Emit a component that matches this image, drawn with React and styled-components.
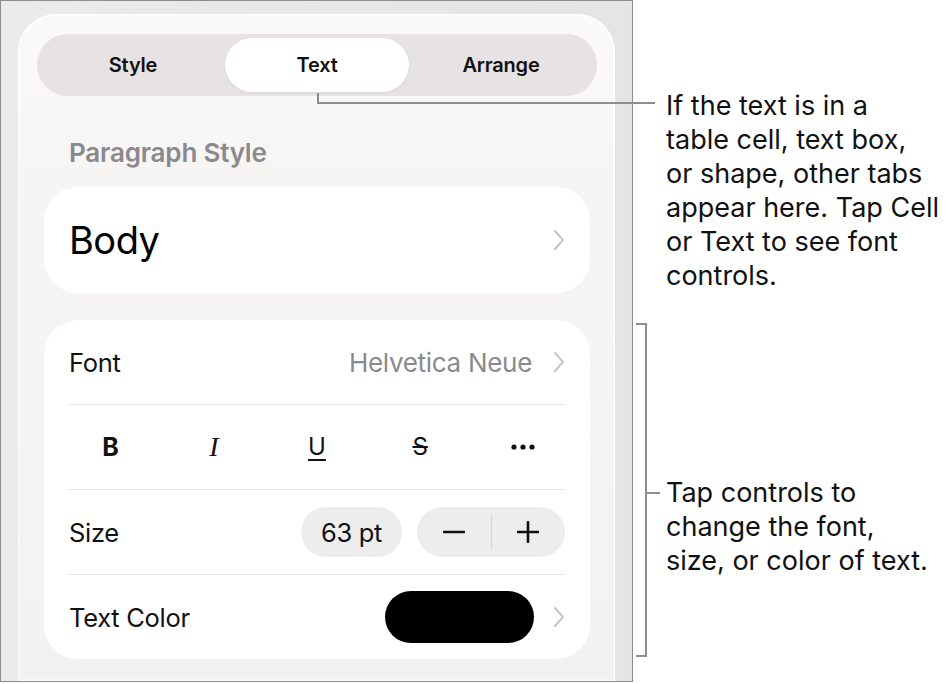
import React from 'react';
import styled, { createGlobalStyle } from 'styled-components';

const Global = createGlobalStyle`
  html, body { margin: 0; padding: 0; background: #ffffff; }
  body {
    font-family: Inter, "Noto Sans", "Liberation Sans", sans-serif;
    color: #000;
    -webkit-font-smoothing: antialiased;
  }
`;

const Page = styled.div`
  position: relative;
  width: 948px;
  height: 684px;
  display: flex;
  align-items: flex-start;
  overflow: hidden;
`;

const Frame = styled.div`
  box-sizing: border-box;
  flex-shrink: 0;
  width: 633px;
  height: 682px;
  border: 1px solid #8d8d8d;
  background: linear-gradient(90deg, #ebebeb 0%, #e6e7e8 50%, #e3e4e5 100%);
  padding: 13px 17px 0 17px;
  overflow: hidden;
`;

const Panel = styled.div`
  box-sizing: border-box;
  height: 100%;
  border-radius: 38px 38px 0 0;
  background: linear-gradient(180deg, #fcf9f9 0%, #f7f4f4 25%, #f2f2f2 100%);
  box-shadow: inset 0 0 0 1.5px rgba(255, 255, 255, 0.85);
  padding: 20px 25px 0 26px;
  display: flex;
  flex-direction: column;
`;

const TabBar = styled.div`
  box-sizing: border-box;
  margin: 0 -7px;
  height: 62px;
  border-radius: 31px;
  background: #e7e3e4;
  padding: 4px;
  display: grid;
  grid-template-columns: repeat(3, 1fr);
`;

const Tab = styled.div`
  display: flex;
  align-items: center;
  justify-content: center;
  border-radius: 27px;
  font-size: 20px;
  font-weight: 560;
  letter-spacing: -0.2px;
  color: #111;
  background: ${p => (p.$active ? '#ffffff' : 'transparent')};
  box-shadow: ${p => (p.$active ? '0 1px 3px rgba(0,0,0,0.06)' : 'none')};
`;

const SectionLabel = styled.div`
  margin: 43px 0 0 25px;
  height: 28px;
  line-height: 28px;
  font-size: 26px;
  font-weight: 600;
  color: #8a8a8e;
  letter-spacing: -0.2px;
`;

const Card = styled.div`
  margin-top: ${p => p.$mt}px;
  background: #ffffff;
  border-radius: 34px;
  display: flex;
  flex-direction: column;
`;

const BodyRow = styled.div`
  height: 106px;
  padding: 0 25px;
  display: flex;
  align-items: center;
  justify-content: space-between;
`;

const BodyText = styled.span`
  font-size: 38px;
  font-weight: 400;
  letter-spacing: -0.5px;
`;

const Row = styled.div`
  margin: 0 25px;
  height: 84px;
  display: flex;
  align-items: center;
  justify-content: space-between;
  & + & {
    border-top: 1px solid #e4e4e6;
  }
`;

const RowLabel = styled.span`
  font-size: 25.5px;
  letter-spacing: -0.3px;
  color: #111;
`;

const RightGroup = styled.div`
  display: flex;
  align-items: center;
  gap: ${p => p.$gap}px;
`;

const Value = styled.span`
  font-size: 26px;
  letter-spacing: -0.3px;
  color: #8a8a8e;
`;

const StyleGrid = styled.div`
  flex: 1;
  margin: 0 -10px;
  display: grid;
  grid-template-columns: repeat(5, 1fr);
  align-items: center;
  justify-items: center;
`;

const StyleBtn = styled.span`
  font-size: ${p => p.$size || 23}px;
  line-height: 30px;
  color: #111;
  font-weight: ${p => (p.$bold ? 700 : 400)};
  font-style: ${p => (p.$italic ? 'italic' : 'normal')};
  font-family: ${p => (p.$serif ? '"Liberation Serif", serif' : 'Inter, sans-serif')};
  text-decoration: ${p => p.$deco || 'none'};
  text-decoration-thickness: 2px;
  text-underline-offset: 4px;
`;

const Pill = styled.div`
  box-sizing: border-box;
  height: 50px;
  width: ${p => p.$w}px;
  border-radius: 25px;
  background: #ededee;
  display: flex;
  align-items: center;
  justify-content: center;
  font-size: 25.5px;
  letter-spacing: -0.3px;
  color: #111;
`;

const Stepper = styled.div`
  box-sizing: border-box;
  height: 50px;
  width: 148px;
  border-radius: 25px;
  background: #ededee;
  display: grid;
  grid-template-columns: 1fr 1px 1fr;
  align-items: center;
  justify-items: center;
`;

const StepDivider = styled.div`
  width: 1px;
  height: 36px;
  background: #d6d6d8;
`;

const Swatch = styled.div`
  width: 149px;
  height: 52px;
  border-radius: 26px;
  background: #000;
`;

const Notes = styled.div`
  margin-left: 33px;
  display: flex;
  flex-direction: column;
`;

const Note = styled.p`
  margin: ${p => p.$mt}px 0 0 0;
  font-size: 27px;
  line-height: 34px;
  color: #111;
  letter-spacing: 0;
  white-space: nowrap;
`;

const Overlay = styled.svg`
  position: absolute;
  left: 0;
  top: 0;
  pointer-events: none;
`;

const Chevron = () => (
  <svg width="12" height="22" viewBox="0 0 12 22">
    <polyline points="2,2 10,11 2,20" fill="none" stroke="#c5c5c8" strokeWidth="2" strokeLinecap="round" strokeLinejoin="round" />
  </svg>
);

const Dots = () => (
  <svg width="26" height="8" viewBox="0 0 26 8">
    <circle cx="4" cy="4" r="2.6" fill="#111" />
    <circle cx="13" cy="4" r="2.6" fill="#111" />
    <circle cx="22" cy="4" r="2.6" fill="#111" />
  </svg>
);

const Minus = () => (
  <svg width="22" height="22" viewBox="0 0 22 22">
    <line x1="1" y1="11" x2="21" y2="11" stroke="#111" strokeWidth="2.6" strokeLinecap="round" />
  </svg>
);

const Plus = () => (
  <svg width="22" height="22" viewBox="0 0 22 22">
    <line x1="1" y1="11" x2="21" y2="11" stroke="#111" strokeWidth="2.6" strokeLinecap="round" />
    <line x1="11" y1="1" x2="11" y2="21" stroke="#111" strokeWidth="2.6" strokeLinecap="round" />
  </svg>
);

export default function App() {
  return (
    <>
      <Global />
      <Page>
        <Frame>
          <Panel>
            <TabBar>
              <Tab>Style</Tab>
              <Tab $active>Text</Tab>
              <Tab>Arrange</Tab>
            </TabBar>
            <SectionLabel>Paragraph Style</SectionLabel>
            <Card $mt={20}>
              <BodyRow>
                <BodyText>Body</BodyText>
                <Chevron />
              </BodyRow>
            </Card>
            <Card $mt={27}>
              <Row>
                <RowLabel>Font</RowLabel>
                <RightGroup $gap={21}>
                  <Value>Helvetica Neue</Value>
                  <Chevron />
                </RightGroup>
              </Row>
              <Row>
                <StyleGrid>
                  <StyleBtn $bold $size={25}>B</StyleBtn>
                  <StyleBtn $italic $serif $size={28}>I</StyleBtn>
                  <StyleBtn $deco="underline" $size={24}>U</StyleBtn>
                  <StyleBtn $deco="line-through" $size={24}>S</StyleBtn>
                  <Dots />
                </StyleGrid>
              </Row>
              <Row>
                <RowLabel>Size</RowLabel>
                <RightGroup $gap={15}>
                  <Pill $w={101}>63 pt</Pill>
                  <Stepper>
                    <Minus />
                    <StepDivider />
                    <Plus />
                  </Stepper>
                </RightGroup>
              </Row>
              <Row>
                <RowLabel>Text Color</RowLabel>
                <RightGroup $gap={19}>
                  <Swatch />
                  <Chevron />
                </RightGroup>
              </Row>
            </Card>
          </Panel>
        </Frame>
        <Notes>
          <Note $mt={89}>
            If the text is in a<br />
            table cell, text box,<br />
            or shape, other tabs<br />
            appear here. Tap Cell<br />
            or Text to see font<br />
            controls.
          </Note>
          <Note $mt={183}>
            Tap controls to<br />
            change the font,<br />
            size, or color of text.
          </Note>
        </Notes>
        <Overlay width="948" height="684" viewBox="0 0 948 684">
          <path d="M318 93 V103 H655" fill="none" stroke="#8e8e8e" strokeWidth="2" />
          <path d="M636 324 H646 V656 H636" fill="none" stroke="#8e8e8e" strokeWidth="2" />
          <path d="M646 493 H660" fill="none" stroke="#8e8e8e" strokeWidth="2" />
        </Overlay>
      </Page>
    </>
  );
}
